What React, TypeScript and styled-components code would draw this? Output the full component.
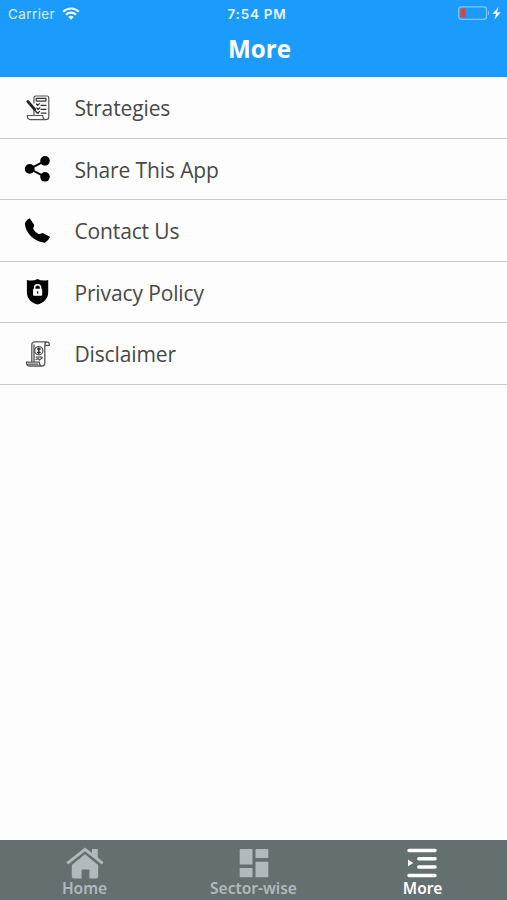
import React from "react";
import styled, { createGlobalStyle } from "styled-components";

const GlobalStyle = createGlobalStyle`
  * { box-sizing: border-box; }
  body { margin: 0; background: #fdfdfd; }
`;

const Screen = styled.div`
  width: 100%;
  height: 900px;
  display: flex;
  flex-direction: column;
  background: #fdfdfd;
  font-family: "Open Sans", sans-serif;
  overflow: hidden;
`;

const Header = styled.header`
  height: 77px;
  flex: none;
  background: #1b9bfb;
  color: #fff;
`;

const StatusBar = styled.div`
  height: 27px;
  padding: 0 5px 0 8px;
  display: grid;
  grid-template-columns: 1fr auto 1fr;
  align-items: center;
  font-family: Inter, "Liberation Sans", sans-serif;
  font-size: 13.5px;
`;

const Carrier = styled.div`
  display: flex;
  align-items: center;
  gap: 7px;
  color: #d9efff;
  letter-spacing: 0.4px;
`;

const Clock = styled.div`
  font-weight: 600;
  font-size: 13.5px;
  letter-spacing: 0.75px;
  color: #e6f4ff;
  padding-left: 4px;
`;

const Power = styled.div`
  display: flex;
  justify-content: flex-end;
`;

const Title = styled.h1`
  margin: 0;
  height: 44px;
  line-height: 44px;
  text-align: center;
  font-size: 24.2px;
  font-weight: 700;
  padding-left: 12px;
`;

const List = styled.ul`
  margin: 0;
  padding: 0;
  list-style: none;
  flex: 1;
`;

const Row = styled.li`
  height: 61.5px;
  padding: 1px 0 0 22px;
  display: flex;
  align-items: center;
  gap: 22.4px;
  border-bottom: 1.5px solid #c9c9c9;
  color: #484848;
  font-size: 21px;
  letter-spacing: -0.12px;
  svg { flex: none; }
`;

const RowLabel = styled.span`
  padding-top: 1px;
`;

const TabBar = styled.nav`
  height: 60px;
  flex: none;
  display: grid;
  grid-template-columns: repeat(3, 1fr);
  background: #646f70;
`;

const Tab = styled.div<{ $active?: boolean }>`
  display: flex;
  flex-direction: column;
  align-items: center;
  padding-top: 5px;
  color: ${(p) => (p.$active ? "#ffffff" : "#b0b9bc")};
  font-family: "Noto Sans", "Open Sans", sans-serif;
  font-size: 15.5px;
  font-weight: 600;
  line-height: 18px;
  svg { display: block; }
`;

const WifiIcon = () => (
  <svg width="18" height="14" viewBox="0 0 18 14" fill="none" stroke="#f2faff" strokeWidth="2.2">
    <path d="M1.2 4.8C5.6.4 12.4.4 16.8 4.8" />
    <path d="M4 7.8c2.8-2.8 7.2-2.8 10 0" />
    <path d="M9 12.8 6.3 10.1a3.8 3.8 0 0 1 5.4 0Z" fill="#f2faff" stroke="none" />
  </svg>
);

const BatteryIcon = () => (
  <svg width="45" height="16" viewBox="0 1 45 16">
    <rect x="1.7" y="1.8" width="27.8" height="12.6" rx="2.6" fill="none" stroke="#7fc7fd" strokeWidth="1.3" />
    <rect x="3.4" y="3.6" width="5.3" height="9" rx="1" fill="#e5413f" />
    <path d="M31 5.7q2.2 2.4 0 4.8Z" fill="#9ad3fe" />
    <path d="m41.5 2-6.1 7h3.6l-1.5 5.7 6.2-7.4h-3.8Z" fill="#f4fbff" />
  </svg>
);

const StrategiesIcon = () => (
  <svg width="30" height="30" viewBox="0 0 30 30" fill="none" stroke="#333" strokeWidth="1.2" strokeLinecap="round" strokeLinejoin="round">
    <path d="M12 10V5q0-2 2-2h11q1.8 0 1.8 2v19q0 2.7-3 2.7H9q-3.6 0-3.8-4.2h15.6q0 4.2 3 4.2M12 17v5.3" stroke="#555" />
    <rect x="14.2" y="5.3" width="9.8" height="2.8" rx=".5" />
    <path d="M15 11.7h1m3 .6h5M15.5 15.8h1.2m2.3.5h5M15 20h1.5m2.8.2h4.7" strokeWidth="1.2" />
    <path d="m14.5 11 1.3 1.4 1.7-1.7m-2.8 4.2 1.4 1.4 1.8-1.7m-3.5 4.1 1.5 1.4 1.7-1.7" />
    <path d="m5.8 8.5 7 8" stroke="#222" strokeWidth="2.7" />
    <path d="m12.5 16.5 1.8 2.8" />
  </svg>
);

const ShareIcon = () => (
  <svg width="30" height="30" viewBox="0 0 30 30">
    <path d="m23 6.8-15.3 8 15.3 8" fill="none" stroke="#000" strokeWidth="1.9" />
    <circle cx="7.7" cy="14.9" r="4.9" />
    <circle cx="23" cy="6.9" r="4.8" />
    <circle cx="23" cy="22.8" r="4.8" />
  </svg>
);

const PhoneIcon = () => (
  <svg width="30" height="30" viewBox="0 0 30 30">
    <path d="M3.4 6.3Q5 3.5 7.7 2.3l4.4 6.4q.4.7-.1 1.4l-.9 2.7q2 3.7 5.8 5.4l3-1q.7-.3 1.4.1l6.1 3.2q.7.4.4 1.1-1.4 3.3-4.7 4.9-.8.4-1.6.1C11.8 24.9 3.9 17.2 2.9 8.2q-.1-1 .5-1.9Z" />
  </svg>
);

const PrivacyIcon = () => (
  <svg width="30" height="30" viewBox="0 0 30 30">
    <path d="M4.9 3q6.2 1.4 10.6-1.1 4.6 2.5 10.7 1.1v12.2c0 6.2-4 10.2-10.7 12.4C8.9 25.4 4.9 21.4 4.9 15.2Z" />
    <rect x="11" y="11.8" width="9.2" height="7" rx="1" fill="#fff" />
    <path d="M12.6 12.5v-1.8a3 3 0 0 1 6 0v1.8" fill="none" stroke="#fff" strokeWidth="1.5" />
    <path d="M15.6 14.8v1.2" stroke="#000" strokeWidth="1.3" strokeLinecap="round" />
  </svg>
);

const DisclaimerIcon = () => (
  <svg width="30" height="30" viewBox="0 0 30 30" fill="none" stroke="#555" strokeWidth="1.3" strokeLinecap="round" strokeLinejoin="round">
    <path d="M9.8 22V5.8q0-3 3-3h12q2.6 0 2.6 3.5h-4.6V24q0 3-3 3H7.5q-3 0-3-3.8h13q0 3.8 2.5 3.8M22.8 6.3q0-3 2-3.5M12 23V5.8M6 25.2h10" />
    <circle cx="16.8" cy="11.7" r="4.1" strokeWidth="1.3" />
    <path d="M16.8 9v5.4M15.6 10h2.5m-2.5 3.4h2.5" stroke="#333" strokeWidth="1.5" />
    <path d="M14 18.2h6m-6 2.4 2.2-1 1.2 1.4 3-2.2" />
  </svg>
);

const HomeIcon = () => (
  <svg width="38" height="34" viewBox="0 0 38 34" fill="currentColor">
    <path d="M5.8 20 19 9.2 32.2 20V31.5q0 2-2 2h-6.8v-8q0-1-1-1h-5.8q-1 0-1 1v8H7.8q-2 0-2-2Z" />
    <path d="M1.3 18.3 19 4.4l17.7 13.9" fill="none" stroke="currentColor" strokeWidth="2.9" />
    <path d="M26 4h5.8v11L26 10.4Z" />
  </svg>
);

const SectorIcon = () => (
  <svg width="38" height="34" viewBox="0 0 38 34" fill="currentColor">
    <path d="M4.7 4h12.8v15.5H4.7ZM20.5 4h12.8v9H20.5ZM4.7 23h12.8v9.3H4.7ZM20.5 16.7h12.8v15.6H20.5Z" />
  </svg>
);

const MoreIcon = () => (
  <svg width="38" height="34" viewBox="0 0 38 34" fill="none" stroke="currentColor" strokeWidth="3.5" strokeLinecap="round">
    <path d="M5 5.4h26M14.8 13.7H31M14.8 22H31M5 30.5h26" />
    <path d="m4 14.6 5.3 3.3L4 21.2Z" fill="currentColor" stroke="none" />
  </svg>
);

const items = [
  { label: "Strategies", Icon: StrategiesIcon },
  { label: "Share This App", Icon: ShareIcon },
  { label: "Contact Us", Icon: PhoneIcon },
  { label: "Privacy Policy", Icon: PrivacyIcon },
  { label: "Disclaimer", Icon: DisclaimerIcon },
];

const tabs = [
  { label: "Home", Icon: HomeIcon },
  { label: "Sector-wise", Icon: SectorIcon },
  { label: "More", Icon: MoreIcon, active: true },
];

export default function App() {
  return (
    <Screen>
      <GlobalStyle />
      <Header>
        <StatusBar>
          <Carrier>Carrier <WifiIcon /></Carrier>
          <Clock>7:54 PM</Clock>
          <Power><BatteryIcon /></Power>
        </StatusBar>
        <Title>More</Title>
      </Header>
      <List>
        {items.map(({ label, Icon }) => (
          <Row key={label}><Icon /><RowLabel>{label}</RowLabel></Row>
        ))}
      </List>
      <TabBar>
        {tabs.map(({ label, Icon, active }) => (
          <Tab key={label} $active={active}><Icon />{label}</Tab>
        ))}
      </TabBar>
    </Screen>
  );
}
